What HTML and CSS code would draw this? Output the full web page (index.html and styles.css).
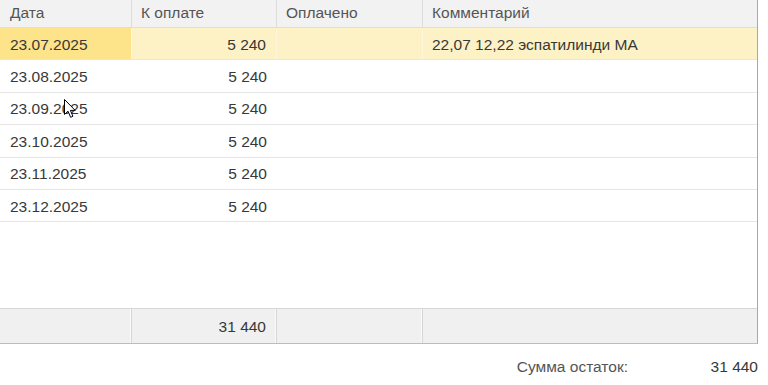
FILE: index.html
```html
<!DOCTYPE html>
<html lang="ru">
<head>
<meta charset="utf-8">
<title>График платежей</title>
<link rel="stylesheet" href="styles.css">
</head>
<body>
<div class="page">
  <div class="grid">
    <div class="row head">
      <div class="cell">Дата</div>
      <div class="cell">К оплате</div>
      <div class="cell">Оплачено</div>
      <div class="cell">Комментарий</div>
    </div>
    <div class="body">
      <div class="row data selected">
        <div class="cell current">23.07.2025</div>
        <div class="cell num">5 240</div>
        <div class="cell"></div>
        <div class="cell">22,07 12,22 эспатилинди МА</div>
      </div>
      <div class="row data">
        <div class="cell">23.08.2025</div>
        <div class="cell num">5 240</div>
        <div class="cell"></div>
        <div class="cell"></div>
      </div>
      <div class="row data">
        <div class="cell">23.09.2025</div>
        <div class="cell num">5 240</div>
        <div class="cell"></div>
        <div class="cell"></div>
      </div>
      <div class="row data">
        <div class="cell">23.10.2025</div>
        <div class="cell num">5 240</div>
        <div class="cell"></div>
        <div class="cell"></div>
      </div>
      <div class="row data">
        <div class="cell">23.11.2025</div>
        <div class="cell num">5 240</div>
        <div class="cell"></div>
        <div class="cell"></div>
      </div>
      <div class="row data">
        <div class="cell">23.12.2025</div>
        <div class="cell num">5 240</div>
        <div class="cell"></div>
        <div class="cell"></div>
      </div>
    </div>
    <div class="row foot">
      <div class="cell"></div>
      <div class="cell num">31 440</div>
      <div class="cell"></div>
      <div class="cell"></div>
    </div>
  </div>
  <div class="summary">
    <span class="label">Сумма остаток:</span>
    <span class="value">31 440</span>
  </div>
  <svg class="cursor" width="13" height="20" viewBox="0 0 13 20" aria-hidden="true">
    <path d="M0.5 0.5 L0.5 15.5 L4 12.2 L6.6 18.3 L8.9 17.3 L6.4 11.4 L11.2 11.4 Z" fill="#fff" stroke="#000" stroke-width="1" stroke-linejoin="miter"/>
  </svg>
</div>
</body>
</html>
```
FILE: styles.css
```css
html, body {
  margin: 0;
  padding: 0;
  background: #ffffff;
}

.page {
  position: relative;
  width: 768px;
  height: 385px;
  font-family: "Liberation Sans", Arial, sans-serif;
  font-size: 15.5px;
  color: #383838;
}

.grid {
  width: 758px;
  height: 344px;
  border-right: 1px solid #a8a8a8;
  border-bottom: 1px solid #bcbcbc;
  box-sizing: border-box;
  display: flex;
  flex-direction: column;
}

.row {
  display: grid;
  grid-template-columns: 132px 145px 146px 1fr;
}

.cell {
  padding: 0 10px;
  display: flex;
  align-items: center;
  white-space: nowrap;
  overflow: hidden;
}

.cell.num {
  justify-content: flex-end;
}

.head {
  height: 28px;
  background: #f2f2f2;
  border-bottom: 1px solid #dedede;
  box-sizing: border-box;
  color: #555555;
}

.head .cell {
  border-right: 1px solid #dcdcdc;
  padding-bottom: 2px;
}

.head .cell:last-child {
  border-right: none;
}

.head .cell:nth-child(2),
.head .cell:nth-child(3),
.head .cell:nth-child(4) {
  padding-left: 9px;
}

.body {
  flex: 1;
  display: flex;
  flex-direction: column;
}

.data {
  height: 32.4px;
  box-sizing: border-box;
  border-bottom: 1px solid #e6e6e6;
}

.data .cell {
  padding-top: 2px;
}

.data .cell:nth-child(4) {
  padding-left: 9px;
}

.selected .cell {
  background: #fdf1c6;
  border-right: 1px solid #fdf6dc;
}

.selected .cell:last-child {
  border-right: none;
}

.selected .cell.current {
  background: #fde38a;
}

.foot {
  height: 35px;
  background: #f0f0f0;
  border-top: 1px solid #d6d6d6;
  box-sizing: border-box;
}

.foot .cell {
  border-right: 1px solid #d6d6d6;
  box-shadow: inset -1px 0 0 #fafafa;
  padding-top: 2px;
}

.foot .cell:last-child {
  border-right: none;
  box-shadow: none;
}

.summary {
  display: flex;
  justify-content: flex-end;
  align-items: center;
  width: 758px;
  height: 46px;
  color: #383838;
}

.summary .label {
  color: #555555;
}

.summary .value {
  width: 120px;
  text-align: right;
  margin-left: 10px;
}

.cursor {
  position: absolute;
  left: 64px;
  top: 99px;
}
```
